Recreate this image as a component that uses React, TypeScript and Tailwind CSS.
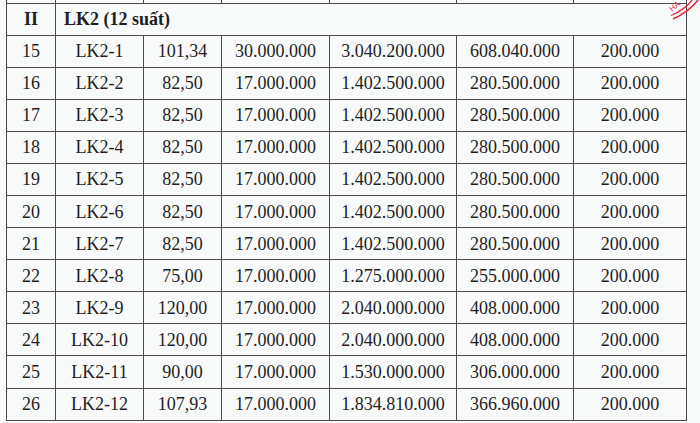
const rows = [
  ['15', 'LK2-1', '101,34', '30.000.000', '3.040.200.000', '608.040.000', '200.000'],
  ['16', 'LK2-2', '82,50', '17.000.000', '1.402.500.000', '280.500.000', '200.000'],
  ['17', 'LK2-3', '82,50', '17.000.000', '1.402.500.000', '280.500.000', '200.000'],
  ['18', 'LK2-4', '82,50', '17.000.000', '1.402.500.000', '280.500.000', '200.000'],
  ['19', 'LK2-5', '82,50', '17.000.000', '1.402.500.000', '280.500.000', '200.000'],
  ['20', 'LK2-6', '82,50', '17.000.000', '1.402.500.000', '280.500.000', '200.000'],
  ['21', 'LK2-7', '82,50', '17.000.000', '1.402.500.000', '280.500.000', '200.000'],
  ['22', 'LK2-8', '75,00', '17.000.000', '1.275.000.000', '255.000.000', '200.000'],
  ['23', 'LK2-9', '120,00', '17.000.000', '2.040.000.000', '408.000.000', '200.000'],
  ['24', 'LK2-10', '120,00', '17.000.000', '2.040.000.000', '408.000.000', '200.000'],
  ['25', 'LK2-11', '90,00', '17.000.000', '1.530.000.000', '306.000.000', '200.000'],
  ['26', 'LK2-12', '107,93', '17.000.000', '1.834.810.000', '366.960.000', '200.000'],
]

const widths = ['w-[49px]', 'w-[88px]', 'w-[78px]', 'w-[108px]', 'w-[127px]', 'w-[117px]', 'w-[113px]']

// red seal edge peeking in at the top right corner
function Stamp() {
  return (
    <svg className="absolute left-[660px] top-0" width="40" height="26" viewBox="0 0 40 26">
      <path d="M13 19 C 22 15, 31 9, 38 0" fill="none" stroke="#e8283a" strokeWidth="1.6" />
      <path d="M11 15.5 C 19 12, 27 7, 32 0" fill="none" stroke="#e8283a" strokeWidth="1.3" />
      <text
        x="12"
        y="12"
        fontSize="8"
        fill="#e8283a"
        fontFamily="'Liberation Sans', sans-serif"
        transform="rotate(-40 12 12)"
      >
        HA
      </text>
    </svg>
  )
}

export default function App() {
  return (
    <div className="relative h-[423px] w-[700px] overflow-hidden bg-[#f8f9f9] font-['Liberation_Serif',serif] text-[18px] text-[#1f1f1f]">
      <table className="ml-[6px] table-fixed border-collapse">
        <colgroup>
          {widths.map((w, i) => (
            <col key={i} className={w} />
          ))}
        </colgroup>
        <tbody>
          <tr className="h-[3px]">
            {widths.map((_, i) => (
              <td key={i} className="border-x border-b border-[#4a4a4a] p-0 leading-none" />
            ))}
          </tr>
          <tr className="h-[32px]">
            <td className="border border-[#4a4a4a] p-0 text-center font-bold">II</td>
            <td colSpan={6} className="border border-[#4a4a4a] py-0 pl-[8px] font-bold">
              LK2 (12 suất)
            </td>
          </tr>
          {rows.map((r) => (
            <tr key={r[0]} className="h-[32.1px]">
              {r.map((c, i) => (
                <td key={i} className="border border-[#4a4a4a] p-0 text-center leading-none">
                  {c}
                </td>
              ))}
            </tr>
          ))}
        </tbody>
      </table>
      <Stamp />
    </div>
  )
}
